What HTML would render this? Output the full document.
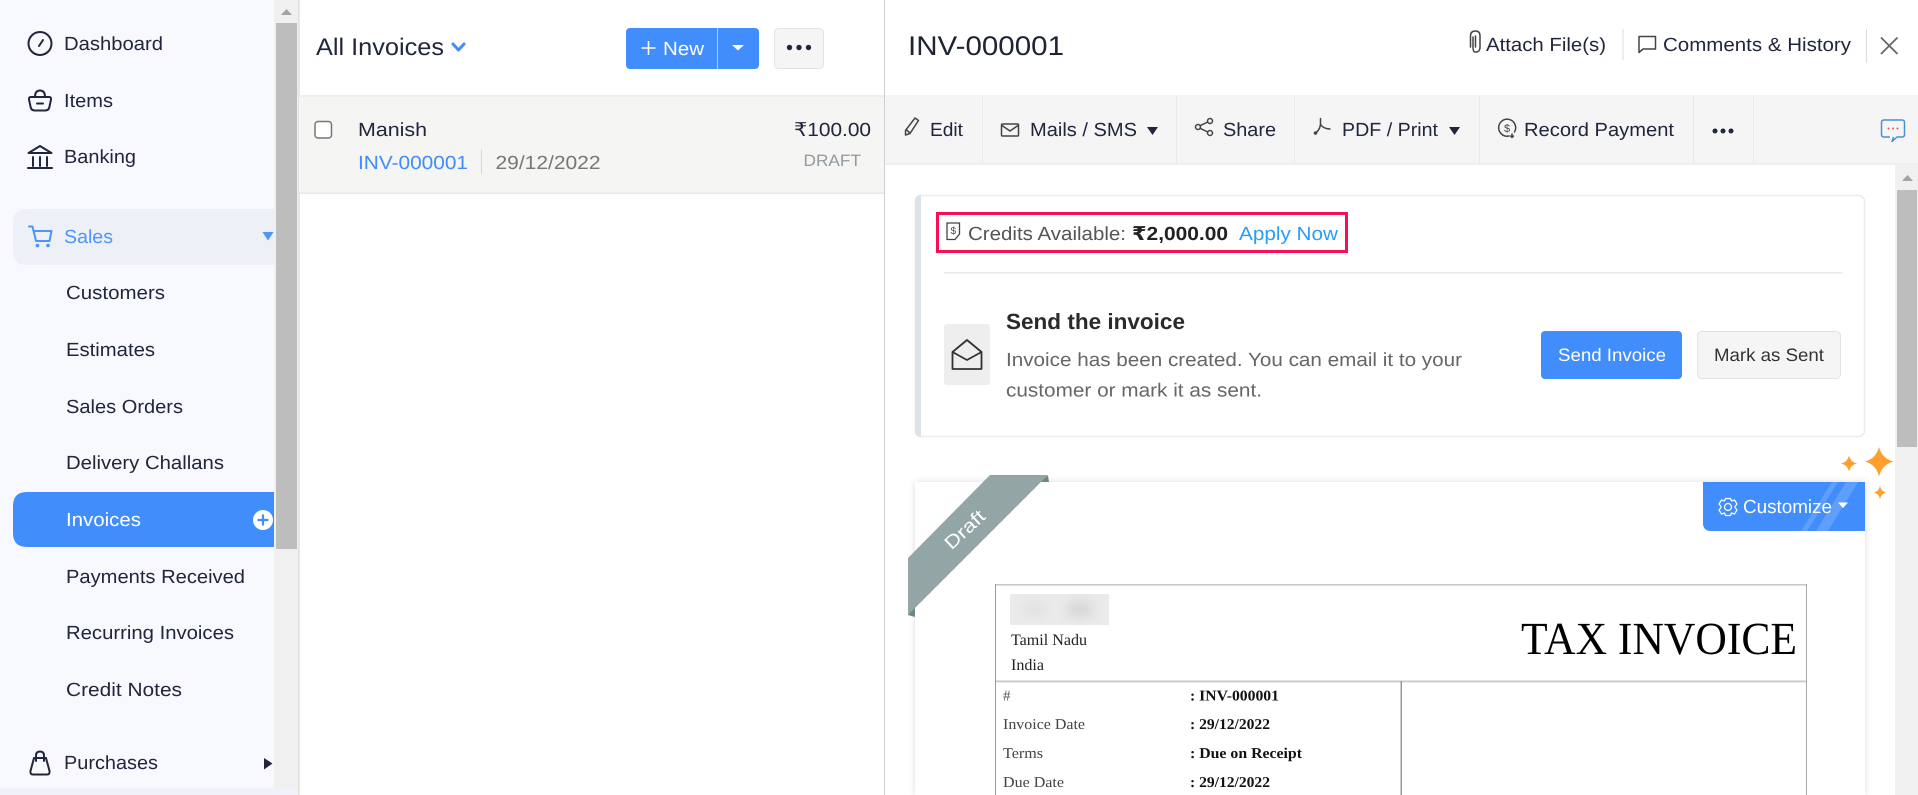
<!DOCTYPE html>
<html lang="en"><head><meta charset="utf-8"><title>INV-000001</title>
<style>
html,body{margin:0;padding:0;background:#fff;width:1918px;height:795px;overflow:hidden}
svg{display:block}
text{font-family:"Liberation Sans","DejaVu Sans",sans-serif;fill:#21263c;font-size:19px;text-rendering:geometricPrecision}
.serif{font-family:"Liberation Serif","DejaVu Serif",serif}
.ic{fill:none;stroke:#21263c;stroke-width:2;stroke-linecap:round;stroke-linejoin:round}
.tb{fill:none;stroke:#444;stroke-width:1.5;stroke-linecap:round;stroke-linejoin:round}
</style></head><body>
<svg width="1918" height="795" viewBox="0 0 1918 795" xmlns="http://www.w3.org/2000/svg">
<defs>
<filter id="sh" x="-5%" y="-5%" width="110%" height="110%"><feDropShadow dx="0" dy="0" stdDeviation="3.5" flood-color="#000" flood-opacity=".14"/></filter>
<filter id="bl" x="-50%" y="-100%" width="200%" height="300%"><feGaussianBlur stdDeviation="7"/></filter>
<clipPath id="cz"><path d="M1703 482H1865V531H1711Q1703 531 1703 523Z"/></clipPath>
<clipPath id="blurclip"><rect x="1010" y="594" width="99" height="31"/></clipPath>
</defs>

<rect width="1918" height="795" fill="#fff"/>

<!-- Sidebar -->
<rect x="0" y="0" width="274" height="795" fill="#f7f9ff"/>
<rect x="274" y="0" width="25" height="795" fill="#f0f0f0"/>
<rect x="276" y="23" width="21" height="526" fill="#bdbdbd"/>
<path d="M281 15L286.500 9L292 15Z" fill="#a3a3a3"/>
<rect x="0" y="788" width="299" height="7" fill="#f1f2f9"/>

<!-- Sidebar icons -->
<circle cx="40" cy="43.500" r="11.500" class="ic"/>
<path d="M39 46L43 40" class="ic" stroke-width="2.400"/>
<path d="M31 97H49Q51.500 97 51 99.500L49.500 106.500Q49 110.500 45 110.500H35Q31 110.500 30.500 106.500L29 99.500Q28.500 97 31 97Z" class="ic"/>
<path d="M35 97Q35 90.500 40 90.500Q45 90.500 45 97" class="ic"/>
<path d="M37 103.500H43" class="ic"/>
<path d="M28.500 153L40 146L51.500 153Z" class="ic"/>
<path d="M33 157V166M40 157V166M47 157V166" class="ic"/>
<path d="M28 168H52" class="ic"/>
<path d="M34 758H46L49.500 771Q50 774.500 47 774.500H33Q30 774.500 30.500 771Z" class="ic"/>
<path d="M36 761V755.500Q36 751.500 40 751.500Q44 751.500 44 755.500V761" class="ic"/>

<!-- Sidebar items -->
<text x="64" y="50" textLength="99" lengthAdjust="spacingAndGlyphs">Dashboard</text>
<text x="64" y="107" textLength="49" lengthAdjust="spacingAndGlyphs">Items</text>
<text x="64" y="163" textLength="72" lengthAdjust="spacingAndGlyphs">Banking</text>
<path d="M27 209H274V265H27Q13 265 13 251V223Q13 209 27 209Z" fill="#eef0f8"/>
<path d="M29 226.500H32.500L36 241H49.500L51.500 231H34" fill="none" stroke="#4d94ff" stroke-width="2" stroke-linecap="round" stroke-linejoin="round"/>
<circle cx="37.500" cy="245.500" r="1.800" fill="#4d94ff"/><circle cx="48" cy="245.500" r="1.800" fill="#4d94ff"/>
<text x="64" y="243" textLength="49" lengthAdjust="spacingAndGlyphs" style="fill:#4d94ff">Sales</text>
<path d="M262.500 232H273.500L268 240.500Z" fill="#4d94ff"/>
<text x="66" y="299" textLength="99" lengthAdjust="spacingAndGlyphs">Customers</text>
<text x="66" y="356" textLength="89" lengthAdjust="spacingAndGlyphs">Estimates</text>
<text x="66" y="413" textLength="117" lengthAdjust="spacingAndGlyphs">Sales Orders</text>
<text x="66" y="469" textLength="158" lengthAdjust="spacingAndGlyphs">Delivery Challans</text>
<path d="M27 492H274V547H27Q13 547 13 533V506Q13 492 27 492Z" fill="#408dfb"/>
<text x="66" y="526" textLength="75" lengthAdjust="spacingAndGlyphs" style="fill:#fff">Invoices</text>
<circle cx="263" cy="520" r="10" fill="#fff"/><path d="M263 514.500V525.500M257.500 520H268.500" stroke="#408dfb" stroke-width="2.200"/>
<text x="66" y="583" textLength="179" lengthAdjust="spacingAndGlyphs">Payments Received</text>
<text x="66" y="639" textLength="168" lengthAdjust="spacingAndGlyphs">Recurring Invoices</text>
<text x="66" y="696" textLength="116" lengthAdjust="spacingAndGlyphs">Credit Notes</text>
<text x="64" y="769" textLength="94" lengthAdjust="spacingAndGlyphs">Purchases</text>
<path d="M264 758L272.500 763.500L264 769.500Z" fill="#21263c"/>

<!-- List panel -->
<rect x="298.500" y="0" width="1" height="795" fill="#d4d4d4"/>
<rect x="884" y="0" width="1" height="795" fill="#cfcfcf"/>
<text x="316" y="55" style="font-size:24px" textLength="128" lengthAdjust="spacingAndGlyphs">All Invoices</text>
<path d="M453 44L458.500 50L464 44" fill="none" stroke="#408dfb" stroke-width="3" stroke-linecap="round" stroke-linejoin="round"/>
<rect x="626" y="28" width="133" height="41" rx="4" fill="#408dfb"/>
<rect x="717" y="28" width="1" height="41" fill="#a9cdfd"/>
<path d="M648.500 41V55M641.500 48H655.500" stroke="#fff" stroke-width="1.600"/>
<text x="663" y="55" textLength="41" lengthAdjust="spacingAndGlyphs" style="fill:#fff">New</text>
<path d="M732 45H744L738 50.500Z" fill="#fff"/>
<rect x="774.500" y="28.500" width="49" height="40" rx="4" fill="#f5f5f5" stroke="#e3e3e3"/>
<circle cx="789.500" cy="47.500" r="2.700" fill="#21263c"/><circle cx="799" cy="47.500" r="2.700" fill="#21263c"/><circle cx="808.500" cy="47.500" r="2.700" fill="#21263c"/>

<rect x="299" y="95" width="585" height="99" fill="#f5f5f3"/>
<rect x="299" y="95" width="585" height="2" fill="#eeeeee"/>
<rect x="299" y="192.500" width="585" height="1.500" fill="#e8e8e8"/>
<rect x="315" y="121.500" width="16.500" height="16.500" rx="3" fill="#fff" stroke="#777" stroke-width="1.500"/>
<text x="358" y="136" textLength="69" lengthAdjust="spacingAndGlyphs">Manish</text>
<text x="358" y="169" textLength="110" lengthAdjust="spacingAndGlyphs" style="fill:#408dfb">INV-000001</text>
<rect x="481" y="150" width="1" height="24" fill="#d5d5d5"/>
<text x="495.500" y="169" textLength="105" lengthAdjust="spacingAndGlyphs" style="fill:#777">29/12/2022</text>
<text x="794" y="136" textLength="77" lengthAdjust="spacingAndGlyphs">₹100.00</text>
<text x="803.500" y="166" textLength="57.500" lengthAdjust="spacingAndGlyphs" style="font-size:16.500px;fill:#929a9f">DRAFT</text>

<!-- Detail header -->
<text x="908" y="55" textLength="156" lengthAdjust="spacingAndGlyphs" style="font-size:27px;fill:#1f2433">INV-000001</text>
<path d="M1473 37V47Q1473 52 1475 52Q1480 52.500 1480 47V36Q1480 31 1475.500 31Q1470.500 31 1470.500 36V47" class="tb" stroke-width="1.600"/>
<path d="M1475.500 36V47" class="tb"/>
<text x="1486" y="51" textLength="120" lengthAdjust="spacingAndGlyphs">Attach File(s)</text>
<rect x="1622.500" y="29" width="1" height="31" fill="#dcdcdc"/>
<path d="M1639 36.500H1655.500V49H1643L1639 52.500Z" class="tb"/>
<text x="1663" y="51" textLength="188" lengthAdjust="spacingAndGlyphs">Comments &amp; History</text>
<rect x="1866" y="29" width="1" height="34" fill="#dcdcdc"/>
<path d="M1881 37.500L1897.500 54M1897.500 37.500L1881 54" fill="none" stroke="#666" stroke-width="1.800"/>

<!-- Toolbar -->
<rect x="885" y="95" width="1033" height="69" fill="#f5f5f5"/>
<rect x="885" y="163" width="1033" height="2" fill="#efefef"/>
<g fill="#e9e9e9"><rect x="982" y="96" width="1" height="67"/><rect x="1176" y="96" width="1" height="67"/><rect x="1294" y="96" width="1" height="67"/><rect x="1479" y="96" width="1" height="67"/><rect x="1693" y="96" width="1" height="67"/><rect x="1753" y="96" width="1" height="67"/></g>

<path d="M915 118L918.500 120.500L910 133.500L905.500 135L905.500 130.500Z" class="tb"/><path d="M906.500 130L910 133" class="tb"/>
<text x="930" y="136" textLength="33" lengthAdjust="spacingAndGlyphs">Edit</text>
<rect x="1001.500" y="124" width="17" height="12" rx="1" class="tb"/><path d="M1002 125.500L1010 131L1018 125.500" class="tb"/>
<text x="1030" y="136" textLength="107" lengthAdjust="spacingAndGlyphs">Mails / SMS</text>
<path d="M1147 127H1158L1152.500 135Z" fill="#21263c"/>
<circle cx="1198" cy="127" r="2.500" class="tb"/><circle cx="1210" cy="121" r="2.500" class="tb"/><circle cx="1210" cy="133" r="2.500" class="tb"/>
<path d="M1200 125.700L1207.800 122M1200 128.300L1207.800 132" class="tb"/>
<text x="1223" y="136" textLength="53" lengthAdjust="spacingAndGlyphs">Share</text>
<path d="M1320.500 118.500V124Q1320 130 1315 133.500M1320.500 124Q1322.500 128.500 1330 129" class="tb" stroke-width="1.800"/>
<circle cx="1315.500" cy="133" r="1.800" fill="#444"/>
<text x="1342" y="136" textLength="96" lengthAdjust="spacingAndGlyphs">PDF / Print</text>
<path d="M1449 127H1460L1454.500 135Z" fill="#21263c"/>
<path d="M1514.500 132A8.500 8.500 0 1 0 1509 136" class="tb"/>
<path d="M1512 134V137.500M1510.500 136L1512 137.500L1513.500 136" class="tb" stroke-width="1.100"/>
<text x="1504" y="132" style="font-size:11px;fill:#444">$</text>
<text x="1524" y="136" textLength="150" lengthAdjust="spacingAndGlyphs">Record Payment</text>
<circle cx="1715" cy="131" r="2.500" fill="#21263c"/><circle cx="1723" cy="131" r="2.500" fill="#21263c"/><circle cx="1731" cy="131" r="2.500" fill="#21263c"/>
<path d="M1890 137H1884Q1881.500 137 1881.500 134.500V122.500Q1881.500 120 1884 120H1902Q1904.500 120 1904.500 122.500V134.500Q1904.500 137 1902 137H1897L1892 141.500L1893.500 137" fill="none" stroke="#4a90d9" stroke-width="1.500" stroke-linejoin="round"/>
<circle cx="1888.500" cy="128.500" r="1" fill="#ef5350"/><circle cx="1893" cy="128.500" r="1" fill="#ef5350"/><circle cx="1897.500" cy="128.500" r="1" fill="#ef5350"/>

<!-- Right scrollbar -->
<rect x="1895" y="165" width="23" height="630" fill="#f0f0f0"/>
<rect x="1897" y="190" width="20" height="257" fill="#bdbdbd"/>
<path d="M1902 181L1907.500 175L1913 181Z" fill="#a3a3a3"/>

<!-- Credits card -->
<rect x="915.500" y="195.500" width="949" height="241" rx="6" fill="#fff" stroke="#ececec" stroke-width="1.500"/>
<path d="M921 195Q915 195 915 201V431Q915 437 921 437Z" fill="#dde2e6"/>
<rect x="937.500" y="213.500" width="409" height="38" fill="none" stroke="#f50f55" stroke-width="3"/>
<path d="M947 223H959.500V234L955 239.500H947Z" fill="none" stroke="#444" stroke-width="1.300"/>
<text x="950.500" y="234" style="font-size:10px;fill:#444">$</text>
<text x="968" y="240" textLength="158" lengthAdjust="spacingAndGlyphs" style="fill:#555">Credits Available:</text>
<text x="1132" y="240" textLength="96" lengthAdjust="spacingAndGlyphs" style="font-weight:700;fill:#222">₹2,000.00</text>
<text x="1239" y="240" textLength="99" lengthAdjust="spacingAndGlyphs" style="fill:#2a9df4">Apply Now</text>
<rect x="944" y="272" width="898" height="1.500" fill="#e9e9e9"/>
<rect x="944" y="324" width="46" height="61" rx="3" fill="#eeeeee"/>
<path d="M952.500 352L967 340L981.500 352V369H952.500Z" fill="none" stroke="#333" stroke-width="1.800" stroke-linejoin="round"/>
<path d="M952.500 352L967 360L981.500 352" fill="none" stroke="#333" stroke-width="1.800" stroke-linejoin="round"/>
<text x="1006" y="329" textLength="179" lengthAdjust="spacingAndGlyphs" style="font-size:22px;font-weight:700;fill:#2a2a2a">Send the invoice</text>
<text x="1006" y="366" textLength="456" lengthAdjust="spacingAndGlyphs" style="fill:#666">Invoice has been created. You can email it to your</text>
<text x="1006" y="396.500" textLength="256" lengthAdjust="spacingAndGlyphs" style="fill:#666">customer or mark it as sent.</text>
<rect x="1541" y="331" width="141" height="48" rx="4" fill="#408dfb"/>
<text x="1558" y="361" textLength="108" lengthAdjust="spacingAndGlyphs" style="font-size:18px;fill:#fff">Send Invoice</text>
<rect x="1697.500" y="331.500" width="143" height="47" rx="4" fill="#f5f5f5" stroke="#e3e3e3"/>
<text x="1714" y="361" textLength="110" lengthAdjust="spacingAndGlyphs" style="font-size:18px;fill:#333">Mark as Sent</text>

<!-- Invoice page -->
<rect x="915" y="482" width="950" height="313" fill="#fff" filter="url(#sh)"/>
<g clip-path="url(#cz)">
<rect x="1703" y="482" width="162" height="49" fill="#408dfb"/>
<path d="M1832 482H1838L1807 531H1801ZM1846 482H1858L1828 531H1816Z" fill="#5f9ffc"/>
</g>
<circle cx="1728" cy="507" r="3.500" fill="none" stroke="#fff" stroke-width="1.200"/>
<path d="M1725.500 498.500H1730.500L1731.500 501L1734.500 500L1737 504L1735 506.500V507.500L1737 510L1734.500 514L1731.500 513L1730.500 515.500H1725.500L1724.500 513L1721.500 514L1719 510L1721 507.500V506.500L1719 504L1721.500 500L1724.500 501Z" fill="none" stroke="#fff" stroke-width="1.200" stroke-linejoin="round"/>
<text x="1743" y="513" textLength="89" lengthAdjust="spacingAndGlyphs" style="fill:#fff">Customize</text>
<path d="M1838 502.500H1848L1843 508Z" fill="#fff"/>
<g fill="#ffa02e">
<path d="M1879 447Q1882 458.500 1893.500 461.500Q1882 464.500 1879 476.500Q1876 464.500 1865 461.500Q1876 458.500 1879 447Z"/>
<path d="M1849 455.500Q1850.500 462 1857 463.500Q1850.500 465 1849 471.500Q1847.500 465 1841 463.500Q1847.500 462 1849 455.500Z"/>
<path d="M1880 486Q1881.200 491.300 1886 492.500Q1881.200 493.700 1880 499Q1878.800 493.700 1874 492.500Q1878.800 491.300 1880 486Z"/>
</g>

<!-- Ribbon -->
<path d="M1038 482L1048 475.500L1049 482ZM908 615L915 607V617Z" fill="#6f8587"/>
<path d="M990 475H1048L908 615V558Z" fill="#93a5a4"/>
<text x="967" y="535" text-anchor="middle" textLength="48" lengthAdjust="spacingAndGlyphs" transform="rotate(-43 967 532)" style="font-size:18.500px;fill:#fff">Draft</text>

<!-- Invoice doc -->
<rect x="995" y="584" width="812" height="1.600" fill="#c8c8c8"/>
<rect x="995" y="584" width="1" height="211" fill="#9a9a9a"/>
<rect x="1806" y="584" width="1" height="211" fill="#aaa"/>
<rect x="996" y="680.500" width="810" height="1.800" fill="#c8c8c8"/>
<rect x="1400.500" y="681" width="1.500" height="114" fill="#9a9a9a"/>
<g clip-path="url(#blurclip)">
<rect x="1010" y="594" width="99" height="31" fill="#ebebeb"/>
<ellipse cx="1034" cy="609" rx="14" ry="6" fill="#dddddd" filter="url(#bl)"/>
<ellipse cx="1080" cy="609" rx="14" ry="7" fill="#cfcfcf" filter="url(#bl)"/>
</g>
<text class="serif" x="1011" y="645" textLength="76" lengthAdjust="spacingAndGlyphs" style="font-size:16px;fill:#222">Tamil Nadu</text>
<text class="serif" x="1011" y="670" textLength="33" lengthAdjust="spacingAndGlyphs" style="font-size:16px;fill:#222">India</text>
<text class="serif" x="1521" y="654" textLength="276" lengthAdjust="spacingAndGlyphs" style="font-size:46px;fill:#000">TAX INVOICE</text>
<text class="serif" x="1003" y="700.500" style="font-size:15px;fill:#555">#</text>
<text class="serif" x="1003" y="729" textLength="82" lengthAdjust="spacingAndGlyphs" style="font-size:15px;fill:#444">Invoice Date</text>
<text class="serif" x="1003" y="758" textLength="40" lengthAdjust="spacingAndGlyphs" style="font-size:15px;fill:#444">Terms</text>
<text class="serif" x="1003" y="787" textLength="61" lengthAdjust="spacingAndGlyphs" style="font-size:15px;fill:#444">Due Date</text>
<text class="serif" x="1190" y="700.500" textLength="89" lengthAdjust="spacingAndGlyphs" style="font-size:15px;font-weight:700;fill:#111">: INV-000001</text>
<text class="serif" x="1190" y="729" textLength="80" lengthAdjust="spacingAndGlyphs" style="font-size:15px;font-weight:700;fill:#111">: 29/12/2022</text>
<text class="serif" x="1190" y="758" textLength="112" lengthAdjust="spacingAndGlyphs" style="font-size:15px;font-weight:700;fill:#111">: Due on Receipt</text>
<text class="serif" x="1190" y="787" textLength="80" lengthAdjust="spacingAndGlyphs" style="font-size:15px;font-weight:700;fill:#111">: 29/12/2022</text>
</svg>
</body></html>
